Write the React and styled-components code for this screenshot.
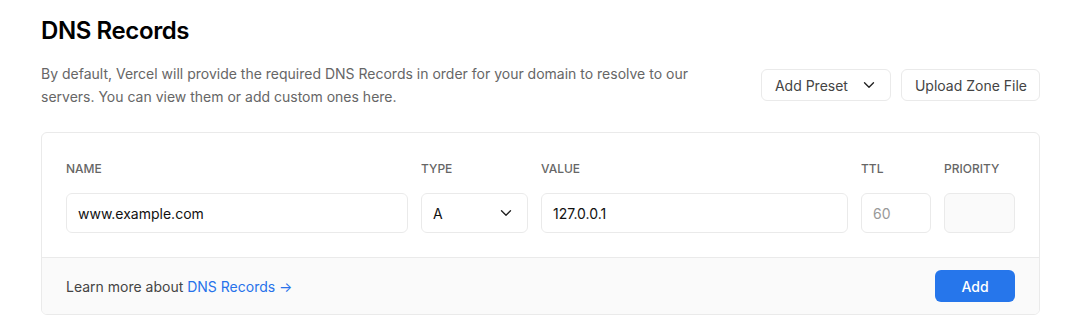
import React from "react";
import styled, { createGlobalStyle } from "styled-components";

const GlobalStyle = createGlobalStyle`
  body {
    margin: 0;
    background: #fff;
    font-family: Inter, "Noto Sans", sans-serif;
    color: #111;
  }
`;

function Chevron() {
  return (
    <svg width="18" height="18" viewBox="0 0 24 24" fill="none" stroke="#222" strokeWidth="1.8" strokeLinecap="round" strokeLinejoin="round">
      <polyline points="6 9 12 15 18 9" />
    </svg>
  );
}

export default function App() {
  return (
    <>
      <GlobalStyle />
      <Page>
        <Title>DNS Records</Title>
        <Intro>
          <Description>
            By default, Vercel will provide the required DNS Records in order for your domain to resolve to our
            servers. You can view them or add custom ones here.
          </Description>
          <Actions>
            <GhostButton>
              Add Preset
              <Chevron />
            </GhostButton>
            <GhostButton>Upload Zone File</GhostButton>
          </Actions>
        </Intro>

        <Card>
          <Form>
            <Label>Name</Label>
            <Label>Type</Label>
            <Label>Value</Label>
            <Label>TTL</Label>
            <Label>Priority</Label>

            <Field>www.example.com</Field>
            <Field>
              A
              <Chevron />
            </Field>
            <Field>127.0.0.1</Field>
            <Field muted>60</Field>
            <Field disabled />
          </Form>
          <Footer>
            <Note>
              Learn more about <Link>DNS Records →</Link>
            </Note>
            <PrimaryButton>Add</PrimaryButton>
          </Footer>
        </Card>
      </Page>
    </>
  );
}

const Page = styled.div`
  width: 999px;
  margin-left: 41px;
  padding-top: 16px;
`;

const Title = styled.h1`
  margin: 0;
  font-size: 24px;
  line-height: 30px;
  font-weight: 600;
  color: #000;
  letter-spacing: -0.4px;
`;

const Intro = styled.div`
  display: flex;
  justify-content: space-between;
  align-items: center;
  margin-top: 16px;
`;

const Description = styled.p`
  margin: 0;
  width: 660px;
  font-size: 14px;
  line-height: 23px;
  color: #666;
`;

const Actions = styled.div`
  display: flex;
  gap: 10px;
`;

const GhostButton = styled.button`
  display: flex;
  align-items: center;
  justify-content: space-between;
  gap: 12px;
  height: 32px;
  padding: 0 12px 0 13px;
  border: 1px solid #eaeaea;
  border-radius: 6px;
  background: #fff;
  font-family: inherit;
  font-size: 14px;
  font-weight: 400;
  color: #444;
`;

const Card = styled.div`
  margin-top: 24px;
  border: 1px solid #eaeaea;
  border-radius: 6px;
  overflow: hidden;
`;

const Form = styled.div`
  display: grid;
  grid-template-columns: 342px 107px 307px 70px 71px;
  column-gap: 13px;
  row-gap: 16px;
  padding: 28px 24px 24px;
`;

const Label = styled.div`
  font-size: 12px;
  line-height: 16px;
  font-weight: 500;
  text-transform: uppercase;
  color: #666;
`;

const Field = styled.div`
  display: flex;
  align-items: center;
  justify-content: space-between;
  box-sizing: border-box;
  height: 40px;
  padding: 0 12px 0 11px;
  border: 1px solid #eaeaea;
  border-radius: 6px;
  background: ${(p) => (p.disabled ? "#fafafa" : "#fff")};
  font-size: 14px;
  color: ${(p) => (p.muted ? "#999" : "#111")};
`;

const Footer = styled.div`
  display: flex;
  align-items: center;
  justify-content: space-between;
  padding: 12px 24px 12px;
  border-top: 1px solid #eaeaea;
  background: #fafafa;
`;

const Note = styled.span`
  font-size: 14px;
  color: #444;
`;

const Link = styled.a`
  color: #2772ea;
  cursor: pointer;
`;

const PrimaryButton = styled.button`
  width: 80px;
  height: 32px;
  border: none;
  border-radius: 6px;
  background: #2676eb;
  color: #fff;
  font-family: inherit;
  font-size: 14px;
  font-weight: 500;
`;
